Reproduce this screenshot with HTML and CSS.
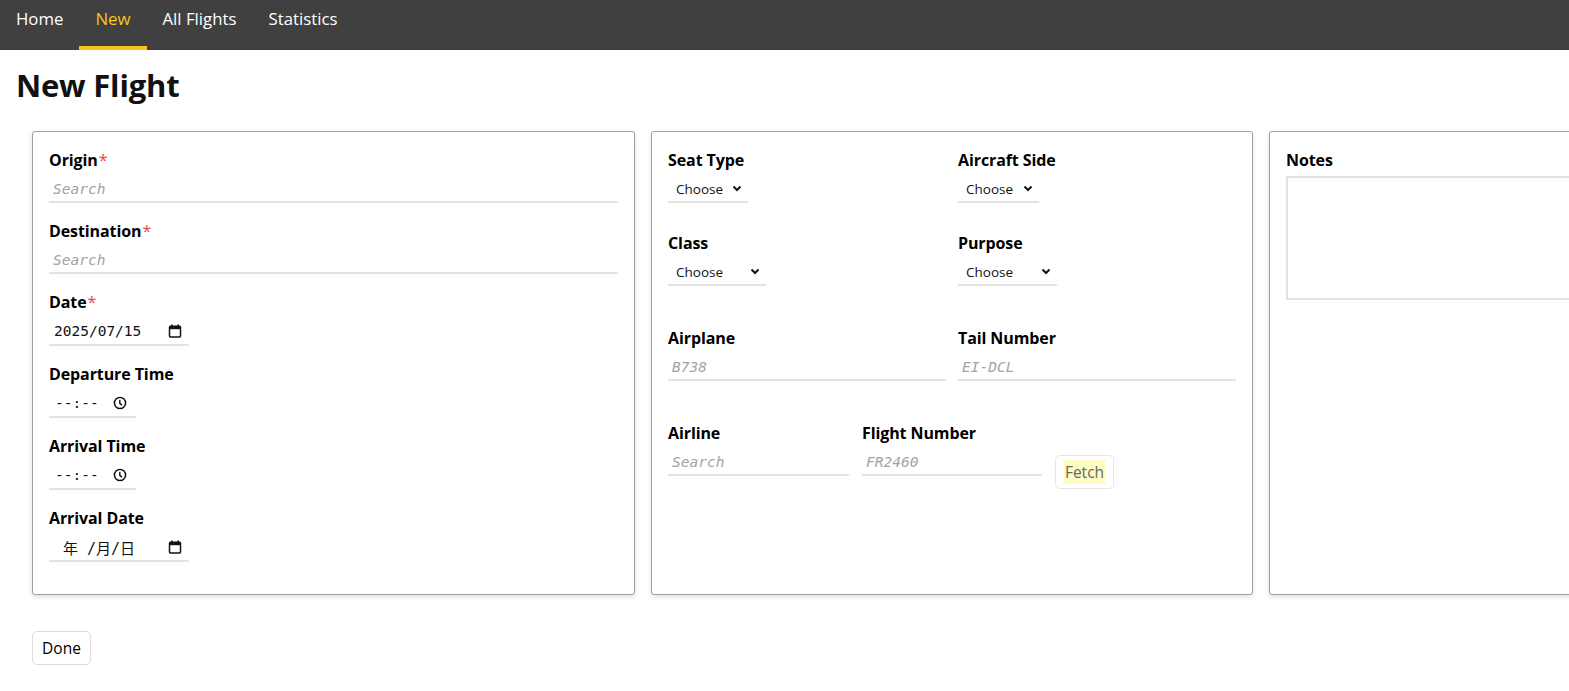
FILE: index.html
```html
<!DOCTYPE html>
<html lang="en">
<head>
<meta charset="utf-8">
<title>New Flight</title>
<link rel="stylesheet" href="styles.css">
</head>
<body>
<nav class="topbar">
  <a class="nav-link" href="#">Home</a>
  <a class="nav-link active" href="#">New</a>
  <a class="nav-link" href="#">All Flights</a>
  <a class="nav-link" href="#">Statistics</a>
</nav>
<main class="page">
  <h1 class="title">New Flight</h1>
  <div class="cards">
    <section class="card">
      <div class="field">
        <label class="label">Origin<span class="req">*</span></label>
        <input class="text-input" type="text" placeholder="Search">
      </div>
      <div class="field">
        <label class="label">Destination<span class="req">*</span></label>
        <input class="text-input" type="text" placeholder="Search">
      </div>
      <div class="field">
        <label class="label">Date<span class="req">*</span></label>
        <div class="dt-field dt-date">
          <span class="dt-text">2025/07/15</span>
          <svg class="dt-icon" width="14" height="14" viewBox="0 0 14 14"><rect x="3" y="0.5" width="1.6" height="3" fill="#111"/><rect x="9.4" y="0.5" width="1.6" height="3" fill="#111"/><rect x="1.5" y="2.2" width="11" height="10.8" rx="1" fill="none" stroke="#111" stroke-width="1.5"/><rect x="1.5" y="2.2" width="11" height="3" fill="#111"/></svg>
        </div>
      </div>
      <div class="field">
        <label class="label">Departure Time</label>
        <div class="dt-field dt-time">
          <span class="dt-text">--:--</span>
          <svg class="dt-icon" width="14" height="14" viewBox="0 0 14 14"><circle cx="7" cy="7" r="5.6" fill="none" stroke="#111" stroke-width="1.5"/><path d="M6.8 4v3.3l2.2 1.8" fill="none" stroke="#111" stroke-width="1.4"/></svg>
        </div>
      </div>
      <div class="field">
        <label class="label">Arrival Time</label>
        <div class="dt-field dt-time">
          <span class="dt-text">--:--</span>
          <svg class="dt-icon" width="14" height="14" viewBox="0 0 14 14"><circle cx="7" cy="7" r="5.6" fill="none" stroke="#111" stroke-width="1.5"/><path d="M6.8 4v3.3l2.2 1.8" fill="none" stroke="#111" stroke-width="1.4"/></svg>
        </div>
      </div>
      <div class="field">
        <label class="label">Arrival Date</label>
        <div class="dt-field dt-date">
          <span class="dt-text cjk"> 年 /月/日</span>
          <svg class="dt-icon" width="14" height="14" viewBox="0 0 14 14"><rect x="3" y="0.5" width="1.6" height="3" fill="#111"/><rect x="9.4" y="0.5" width="1.6" height="3" fill="#111"/><rect x="1.5" y="2.2" width="11" height="10.8" rx="1" fill="none" stroke="#111" stroke-width="1.5"/><rect x="1.5" y="2.2" width="11" height="3" fill="#111"/></svg>
        </div>
      </div>
    </section>

    <section class="card">
      <div class="grid2 row-a">
        <div>
          <label class="label">Seat Type</label>
          <div class="select-wrap sel-80">
            <select class="select"><option>Choose</option></select>
            <svg class="chev" width="10" height="7" viewBox="0 0 10 7"><path d="M1.5 1.5l3.5 3.5 3.5-3.5" fill="none" stroke="#111" stroke-width="2"/></svg>
          </div>
        </div>
        <div>
          <label class="label">Aircraft Side</label>
          <div class="select-wrap sel-81">
            <select class="select"><option>Choose</option></select>
            <svg class="chev" width="10" height="7" viewBox="0 0 10 7"><path d="M1.5 1.5l3.5 3.5 3.5-3.5" fill="none" stroke="#111" stroke-width="2"/></svg>
          </div>
        </div>
      </div>
      <div class="grid2 row-b">
        <div>
          <label class="label">Class</label>
          <div class="select-wrap sel-98">
            <select class="select"><option>Choose</option></select>
            <svg class="chev" width="10" height="7" viewBox="0 0 10 7"><path d="M1.5 1.5l3.5 3.5 3.5-3.5" fill="none" stroke="#111" stroke-width="2"/></svg>
          </div>
        </div>
        <div>
          <label class="label">Purpose</label>
          <div class="select-wrap sel-99">
            <select class="select"><option>Choose</option></select>
            <svg class="chev" width="10" height="7" viewBox="0 0 10 7"><path d="M1.5 1.5l3.5 3.5 3.5-3.5" fill="none" stroke="#111" stroke-width="2"/></svg>
          </div>
        </div>
      </div>
      <div class="grid2 row-c">
        <div>
          <label class="label">Airplane</label>
          <input class="text-input" type="text" placeholder="B738">
        </div>
        <div>
          <label class="label">Tail Number</label>
          <input class="text-input" type="text" placeholder="EI-DCL">
        </div>
      </div>
      <div class="flight-row">
        <div class="airline">
          <label class="label">Airline</label>
          <input class="text-input" type="text" placeholder="Search">
        </div>
        <div class="flightno">
          <label class="label">Flight Number</label>
          <input class="text-input" type="text" placeholder="FR2460">
        </div>
        <button class="btn btn-fetch" type="button"><span class="hl">Fetch</span></button>
      </div>
    </section>

    <section class="card">
      <label class="label">Notes</label>
      <textarea class="notes"></textarea>
    </section>
  </div>
  <button class="btn btn-done" type="button">Done</button>
</main>
</body>
</html>
```

FILE: styles.css
```css
* { box-sizing: border-box; }

html, body {
  margin: 0;
  padding: 0;
  overflow: hidden;
  background: #fff;
  color: #111;
  font-family: "Open Sans", "Noto Sans", sans-serif;
}

.topbar {
  display: flex;
  height: 50px;
  background: #404040;
}

.nav-link {
  display: block;
  height: 50px;
  padding: 8px 16px 0;
  border-bottom: 4px solid transparent;
  color: #fff;
  text-decoration: none;
  font-size: 16.8px;
  line-height: 22px;
}

.nav-link.active {
  color: #fcc419;
  border-bottom-color: #fcc419;
}

.page {
  padding: 0 16px;
}

.title {
  margin: 15px 0 0;
  font-size: 31px;
  line-height: 40px;
  font-weight: 700;
  letter-spacing: -0.2px;
}

.cards {
  display: flex;
  gap: 16px;
  margin: 26px 0 0 16px;
  width: max-content;
}

.card {
  flex: 0 0 603px;
  width: 603px;
  padding: 16px;
  border: 1px solid #a0a0a0;
  border-radius: 3px;
  box-shadow: 0 2px 5px rgba(0, 0, 0, 0.12);
  background: #fff;
}

.card:nth-child(2), .card:nth-child(3) { flex-basis: 602px; width: 602px; }

.field { margin-bottom: 16px; }

.label {
  display: block;
  font-size: 16px;
  line-height: 24px;
  font-weight: 700;
  letter-spacing: -0.1px;
  color: #000;
}

.req {
  color: #f03e3e;
  font-weight: 400;
  margin-left: 1px;
}

.text-input {
  display: block;
  width: 100%;
  height: 27px;
  margin-top: 4px;
  padding: 0 4px;
  border: none;
  border-bottom: 2px solid #e3e3e3;
  outline: none;
  background: transparent;
  font-family: "DejaVu Sans Mono", "Liberation Mono", monospace;
  font-size: 14.5px;
  color: #111;
}

.text-input::placeholder {
  color: #a3a3a3;
  font-style: italic;
}

.dt-field {
  display: flex;
  align-items: center;
  justify-content: space-between;
  height: 28px;
  margin-top: 4px;
  padding: 0 7px 0 5px;
  border-bottom: 2px solid #e3e3e3;
}

.dt-date { width: 140px; }
.dt-time { width: 87px; padding-left: 6px; padding-right: 9px; }

.dt-text {
  font-family: "DejaVu Sans Mono", "Liberation Mono", monospace;
  font-size: 14.5px;
  color: #111;
  white-space: pre;
}

.dt-text.cjk {
  font-family: "DejaVu Sans Mono", "Noto Sans CJK SC", monospace;
  font-size: 15px;
}

.dt-icon { flex: none; }

.grid2 {
  display: grid;
  grid-template-columns: 278px 278px;
  column-gap: 12px;
}

.row-a { margin-bottom: 28px; }
.row-b { margin-bottom: 40px; }
.row-c { margin-bottom: 40px; }

.select-wrap {
  position: relative;
  margin-top: 4px;
  height: 27px;
  border-bottom: 2px solid #e3e3e3;
}

.sel-80 { width: 80px; }
.sel-81 { width: 81px; }
.sel-98 { width: 98px; }
.sel-99 { width: 99px; }

.select {
  appearance: none;
  -webkit-appearance: none;
  width: 100%;
  height: 25px;
  padding: 0 0 0 8px;
  border: none;
  outline: none;
  background: transparent;
  font-family: "Open Sans", "Noto Sans", sans-serif;
  font-size: 13.5px;
  color: #111;
}

.chev {
  position: absolute;
  right: 6px;
  top: 9px;
  pointer-events: none;
}

.flight-row {
  display: flex;
  gap: 13px;
}

.airline { width: 181px; }
.flightno { width: 180px; }

.btn {
  font-family: "Open Sans", "Noto Sans", sans-serif;
  font-size: 15.5px;
  background: #fff;
  border: 1px solid #dcdcdc;
  border-radius: 5px;
  cursor: pointer;
}

.btn-fetch {
  align-self: flex-start;
  margin-top: 34px;
  width: 59px;
  height: 34px;
  padding: 0;
  color: #666;
  border-color: #e6e6e6;
}

.hl {
  background: #fdfcc3;
  padding: 1px 1px;
}

.notes {
  display: block;
  width: 568px;
  height: 124px;
  margin-top: 4px;
  border: 2px solid #e3e3e3;
  resize: none;
  outline: none;
}

.btn-done {
  display: block;
  margin: 36px 0 0 16px;
  width: 59px;
  height: 34px;
  padding: 0;
  color: #000;
}
```
